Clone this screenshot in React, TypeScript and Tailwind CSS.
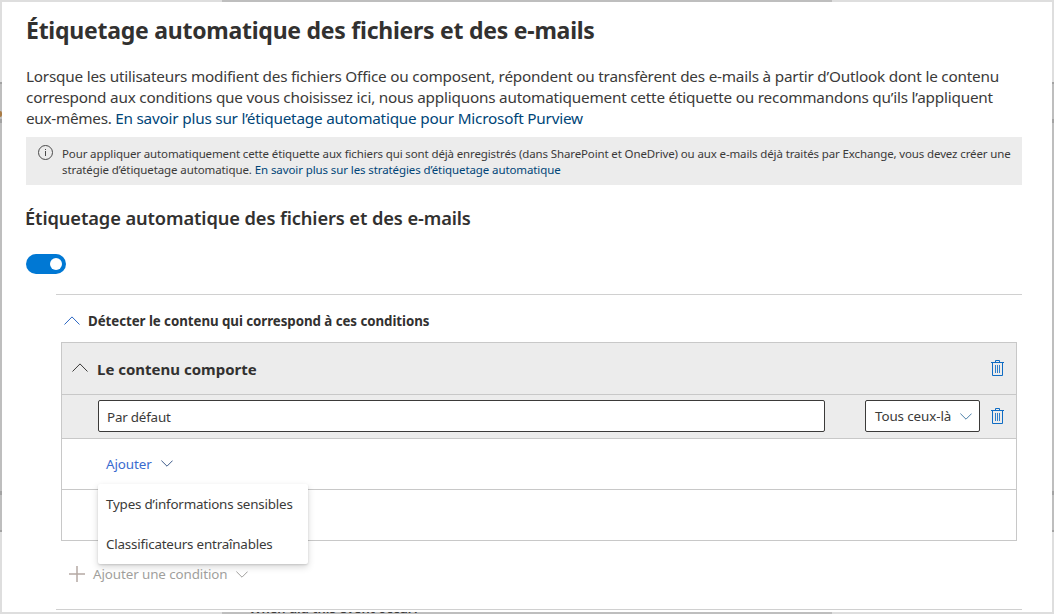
import type { ReactNode } from "react";

function Chevron({ up = false, className }: { up?: boolean; className: string }) {
  return (
    <svg viewBox={up ? "0 0 16 9" : "0 0 12 7"} className={className} fill="none" stroke="currentColor" strokeWidth="1">
      <path d={up ? "M0.5 8.5 8 0.9 15.5 8.5" : "M0.4 0.6 6 6.2 11.6 0.6"} />
    </svg>
  );
}

function TrashIcon() {
  return (
    <svg viewBox="0 0 13 17" className="h-[17px] w-[13px] shrink-0 text-[#0f6cc4]" fill="none" stroke="currentColor" strokeWidth="1">
      <path d="M0 2.5H13M4.5 2.5V0.5H8.5V2.5M1.5 2.5V15.5H11.5V2.5" />
      <path d="M4.5 5V13M6.5 5V13M8.5 5V13" strokeWidth="1" opacity="0.85" />
    </svg>
  );
}

function SideStrip({ accent = false }: { accent?: boolean }) {
  return (
    <div className="flex w-[2px] shrink-0 flex-col bg-[#bebebe]">
      <div className="h-[80px] bg-[#dedede]" />
      <div className="h-[2px] bg-[#a3a3a3]" />
      <div className="h-[27px]" />
      <div className={accent ? "h-[6px] rounded-r-full bg-[#a97b45]" : "h-[6px]"} />
      <div className="h-[2px]" />
      <div className="h-[4px] bg-[#a3a3a3]" />
      <div className="h-[368px]" />
      <div className="h-[4px] bg-[#a3a3a3]" />
      <div className="h-[35px]" />
      <div className="h-[2px] bg-[#a3a3a3]" />
      <div className="flex-1 bg-[#dedede]" />
    </div>
  );
}

function EdgeStrip({ children }: { children?: ReactNode }) {
  return (
    <div className="flex h-[2px] shrink-0 overflow-hidden bg-[#dedede]">
      <div className="w-[222px]" />
      <div className="w-[610px] bg-[#bebebe]">{children}</div>
    </div>
  );
}

function MenuItem({ children }: { children: ReactNode }) {
  return (
    <button type="button" className="flex h-10 items-center px-2 text-left whitespace-nowrap">
      {children}
    </button>
  );
}

export default function App() {
  return (
    <div className="flex h-[614px] w-[1054px] flex-col overflow-hidden font-['Noto_Sans','Open_Sans',sans-serif] text-[#3b3a39]">
      <EdgeStrip />
      <div className="flex min-h-0 flex-1">
        <SideStrip accent />
        <main className="flex min-w-0 flex-1 flex-col bg-white pt-3 pr-[30px] pl-6">
          <h1 className="h-8 text-[23px] leading-8 font-bold tracking-[-0.25px] whitespace-nowrap text-[#323130]">
            Étiquetage automatique des fichiers et des e-mails
          </h1>
          <p className="mt-5 h-[63px] text-[15.3px] leading-[21px] tracking-[-0.21px] whitespace-nowrap">
            Lorsque les utilisateurs modifient des fichiers Office ou composent, répondent ou transfèrent des e-mails à partir d’Outlook dont le contenu
            <br />
            correspond aux conditions que vous choisissez ici, nous appliquons automatiquement cette étiquette ou recommandons qu’ils l’appliquent
            <br />
            <span className="tracking-[-0.29px]">eux-mêmes. </span>
            <a className="text-[#004578]">En savoir plus sur l’étiquetage automatique pour Microsoft Purview</a>
          </p>
          <div className="mt-2 flex h-12 gap-[9px] bg-[#ececec] pt-2 pl-3">
            <svg viewBox="0 0 15 15" className="h-[15px] w-[15px] shrink-0" fill="none" stroke="#4a4a4a" strokeWidth="1">
              <circle cx="7.5" cy="7.5" r="7" />
              <path d="M7.5 6V11M7.5 4V5" />
            </svg>
            <p className="pt-px text-[11.5px] leading-4 tracking-[-0.13px] whitespace-nowrap">
              Pour appliquer automatiquement cette étiquette aux fichiers qui sont déjà enregistrés (dans SharePoint et OneDrive) ou aux e-mails déjà traités par Exchange, vous devez créer une
              <br />
              <span className="tracking-[-0.1px]">
                stratégie d’étiquetage automatique. <a className="text-[#004578]">En savoir plus sur les stratégies d’étiquetage automatique</a>
              </span>
            </p>
          </div>
          <h2 className="mt-5 -ml-px h-[26px] text-[18.3px] leading-[26px] font-semibold tracking-[-0.11px] whitespace-nowrap text-[#323130]">
            Étiquetage automatique des fichiers et des e-mails
          </h2>
          <button type="button" role="switch" aria-checked="true" className="mt-[23px] flex h-5 w-10 items-center justify-end rounded-full bg-[#0078d4] pr-1">
            <span className="h-3 w-3 rounded-full bg-white" />
          </button>
          <section className="mt-5 ml-[30px] flex h-[316px] shrink-0 flex-col border-y border-[#d0d0d0]">
            <div className="mt-[17px] ml-2 flex h-[18px] items-center gap-2">
              <Chevron up className="mb-px h-[9px] w-4 text-[#2b66c2]" />
              <h3 className="text-[13.3px] leading-[18px] font-bold tracking-[-0.05px] whitespace-nowrap text-[#323130]">
                Détecter le contenu qui correspond à ces conditions
              </h3>
            </div>
            <div className="mt-3 mr-[5px] ml-[5px] h-[199px] shrink-0 divide-y divide-[#c8c8c8] border border-[#c8c8c8]">
              <div className="flex h-[52px] items-center bg-[#ececec] pr-3 pl-[10px]">
                <Chevron up className="mb-[3px] h-[9px] w-4" />
                <h4 className="ml-[9px] flex-1 pt-[2px] text-[15px] font-bold text-[#323130]">Le contenu comporte</h4>
                <TrashIcon />
              </div>
              <div className="flex h-11 items-center bg-[#ececec] pr-3 pb-px pl-9 text-[13.4px]">
                <div className="flex h-8 w-[727px] items-center rounded-[2px] border border-[#3b3a39] bg-white pt-[3px] pl-2 tracking-[-0.2px]">Par défaut</div>
                <button type="button" className="ml-10 flex h-8 w-[115px] items-center justify-between rounded-[2px] border border-[#3b3a39] bg-white pt-px pr-[7px] pl-[9px] tracking-[-0.1px]">
                  Tous ceux-là
                  <Chevron className="h-[7px] w-3 text-[#4b7fa8]" />
                </button>
                <div className="ml-[11px]">
                  <TrashIcon />
                </div>
              </div>
              <div className="relative flex h-[51px] items-center pl-11 text-[13.4px]">
                <button type="button" className="flex items-center gap-[9px] tracking-[-0.1px] text-[#3a6bcf]">
                  Ajouter
                  <Chevron className="h-[7px] w-3 text-[#3d5a8a]" />
                </button>
                <div className="absolute top-[45px] left-9 z-10 flex h-20 w-[210px] flex-col rounded-[2px] bg-white tracking-[-0.2px] shadow-[0_3px_7px_rgba(0,0,0,0.16),0_1px_2px_rgba(0,0,0,0.12)]">
                  <MenuItem>Types d’informations sensibles</MenuItem>
                  <MenuItem>Classificateurs entraînables</MenuItem>
                </div>
              </div>
              <div className="h-[50px]" />
            </div>
            <button type="button" className="mt-6 ml-[13px] flex h-[18px] items-center text-[13.4px] leading-[18px] tracking-[-0.1px] text-[#a19f9d]">
              <svg viewBox="0 0 16 16" className="h-4 w-4" fill="none" stroke="#b5a9a4" strokeWidth="1.5">
                <path d="M0 8H16M8 0V16" />
              </svg>
              <span className="ml-2">Ajouter une condition</span>
              <Chevron className="ml-[9px] h-[7px] w-3" />
            </button>
          </section>
        </main>
        <SideStrip />
      </div>
      <EdgeStrip>
        <p className="-mt-3 ml-[27px] text-[13px] leading-4 font-semibold whitespace-nowrap">When did this event occur?</p>
      </EdgeStrip>
    </div>
  );
}
